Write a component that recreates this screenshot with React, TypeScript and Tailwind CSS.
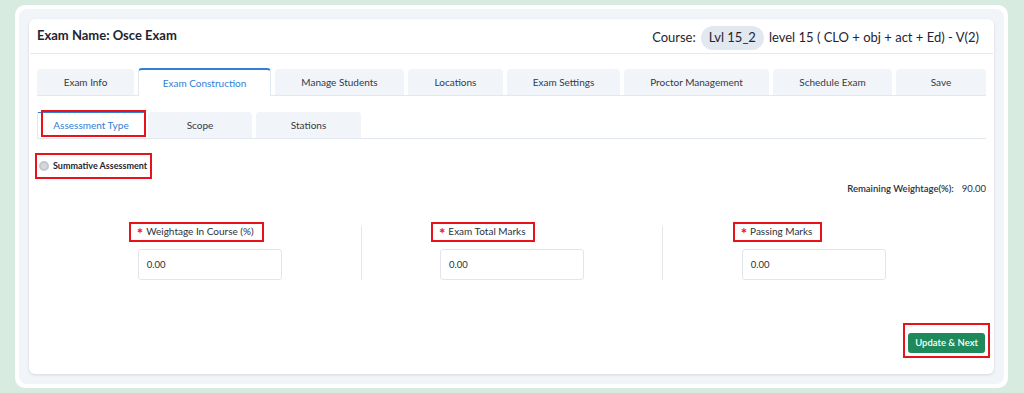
import React from 'react';

const tabs = [
  { label: 'Exam Info', w: 'w-[97px]' },
  { label: 'Exam Construction', w: 'w-[133px]', active: true },
  { label: 'Manage Students', w: 'w-[129px]' },
  { label: 'Locations', w: 'w-[95px]' },
  { label: 'Exam Settings', w: 'w-[113px]' },
  { label: 'Proctor Management', w: 'w-[145px]' },
  { label: 'Schedule Exam', w: 'w-[119px]' },
  { label: 'Save', w: 'w-[90px]' },
];

const fields = ['Weightage In Course (%)', 'Exam Total Marks', 'Passing Marks'];

export default function App() {
  return (
    <div
      className="w-[1024px] h-[393px] bg-[#d7ebe1] pt-[5px] pb-[5px] pl-[15px] pr-[16px]"
      style={{ fontFamily: 'Lato, "Noto Sans", sans-serif' }}
    >
      <div className="h-full rounded-[10px] bg-white p-[4px]">
        <div className="h-full rounded-[8px] bg-[#f1f5f9] p-[10px]">
          <div className="h-full rounded-[6px] bg-white shadow-[0_1px_3px_rgba(0,0,0,0.12)] flex flex-col">
            {/* Header */}
            <div className="h-[35px] flex items-center justify-between pl-[7px] pr-[14px] mx-[1px] border-b border-[#e5e9ef]">
              <h1 className="text-[13px] font-bold text-[#1f2430]">Exam Name: Osce Exam</h1>
              <div className="flex items-center text-[13px] text-[#1f2430] pt-[4px]">
                <span>Course:</span>
                <span className="ml-[5px] px-[8px] py-[2px] rounded-full bg-[#e2e8f0]">Lvl 15_2</span>
                <span className="ml-[5px]">level 15 ( CLO + obj + act + Ed) - V(2)</span>
              </div>
            </div>

            <div className="px-[8px] flex flex-col flex-1">
              {/* Main tabs */}
              <div className="mt-[14px] flex gap-[4px] items-end border-b border-[#e2e8f0]">
                {tabs.map((t) =>
                  t.active ? (
                    <div
                      key={t.label}
                      className={`${t.w} h-[28px] -mb-px flex items-center justify-center bg-white border-t-2 border-[#2f80d6] border-x border-x-[#e2e8f0] rounded-t-[4px] text-[10px] text-[#2f80d6]`}
                    >
                      {t.label}
                    </div>
                  ) : (
                    <div
                      key={t.label}
                      className={`${t.w} h-[26px] flex items-center justify-center bg-[#f1f5f9] rounded-t-[4px] text-[10px] text-[#333a45]`}
                    >
                      {t.label}
                    </div>
                  )
                )}
              </div>

              {/* Sub tabs */}
              <div className="mt-[16px] flex gap-[4px] items-end border-b border-[#e2e8f0] border-l border-l-[#e2e8f0] h-[27px]">
                <div className="relative w-[106px] h-[26px] flex items-center justify-center bg-white border-t border-[#2f80d6] text-[10px] text-[#2f80d6]">
                  Assessment Type
                  <div className="absolute left-[3px] right-[-2px] top-[-3px] bottom-[1px] border-2 border-[#e8121a]" />
                </div>
                <div className="w-[104px] h-[26px] flex items-center justify-center bg-[#f1f5f9] rounded-t-[4px] text-[10px] text-[#333a45]">
                  Scope
                </div>
                <div className="w-[105px] h-[26px] flex items-center justify-center bg-[#f1f5f9] rounded-t-[4px] text-[10px] text-[#333a45]">
                  Stations
                </div>
              </div>

              {/* Summative */}
              <div className="mt-[14px] -ml-[2px] self-start h-[26px] w-[117px] flex items-center border-2 border-[#e8121a] pl-[2px] whitespace-nowrap">
                <span className="shrink-0 w-[10px] h-[10px] rounded-full bg-[#d4d7dc] border-[2px] border-[#c4c8ce]" />
                <span className="ml-[4px] text-[9px] font-bold text-[#1f2430]">Summative Assessment</span>
              </div>

              <div className="mt-[3px] flex justify-end items-center text-[9.5px] text-[#2b313b] font-semibold">
                <span>Remaining Weightage(%):</span>
                <span className="ml-[8px] font-normal">90.00</span>
              </div>

              {/* Fields */}
              <div className="mt-[30px] mx-[22px] grid grid-cols-3">
                {fields.map((f, i) => (
                  <div
                    key={f}
                    className={`flex justify-center ${i > 0 ? 'border-l border-[#e5e7eb]' : ''}`}
                  >
                    <div className="w-[144px] -mt-[5px]">
                      <div className="inline-flex items-center h-[20px] -ml-[9px] pl-[6px] pr-[8px] border-2 border-[#e8121a] whitespace-nowrap">
                        <span className="text-[#e8121a] text-[15px] font-bold leading-none mt-[4px] mr-[3px]">*</span>
                        <span className="text-[10px] text-[#2b313b]">{f}</span>
                      </div>
                      <div className="mt-[4px] h-[31px] rounded-[3px] border border-[#e2e6ec] bg-white flex items-center px-[8px] text-[9.5px] text-[#2b313b]">
                        0.00
                      </div>
                    </div>
                  </div>
                ))}
              </div>

              {/* Button */}
              <div className="mt-auto mb-[16px] flex justify-end">
                <div className="p-[3px] border-2 border-[#e8121a] -mr-[4px]">
                  <button className="h-[20px] px-[7px] rounded-[3px] bg-[#1e8a5b] text-white text-[9.5px] font-semibold">
                    Update &amp; Next
                  </button>
                </div>
              </div>
            </div>
          </div>
        </div>
      </div>
    </div>
  );
}
